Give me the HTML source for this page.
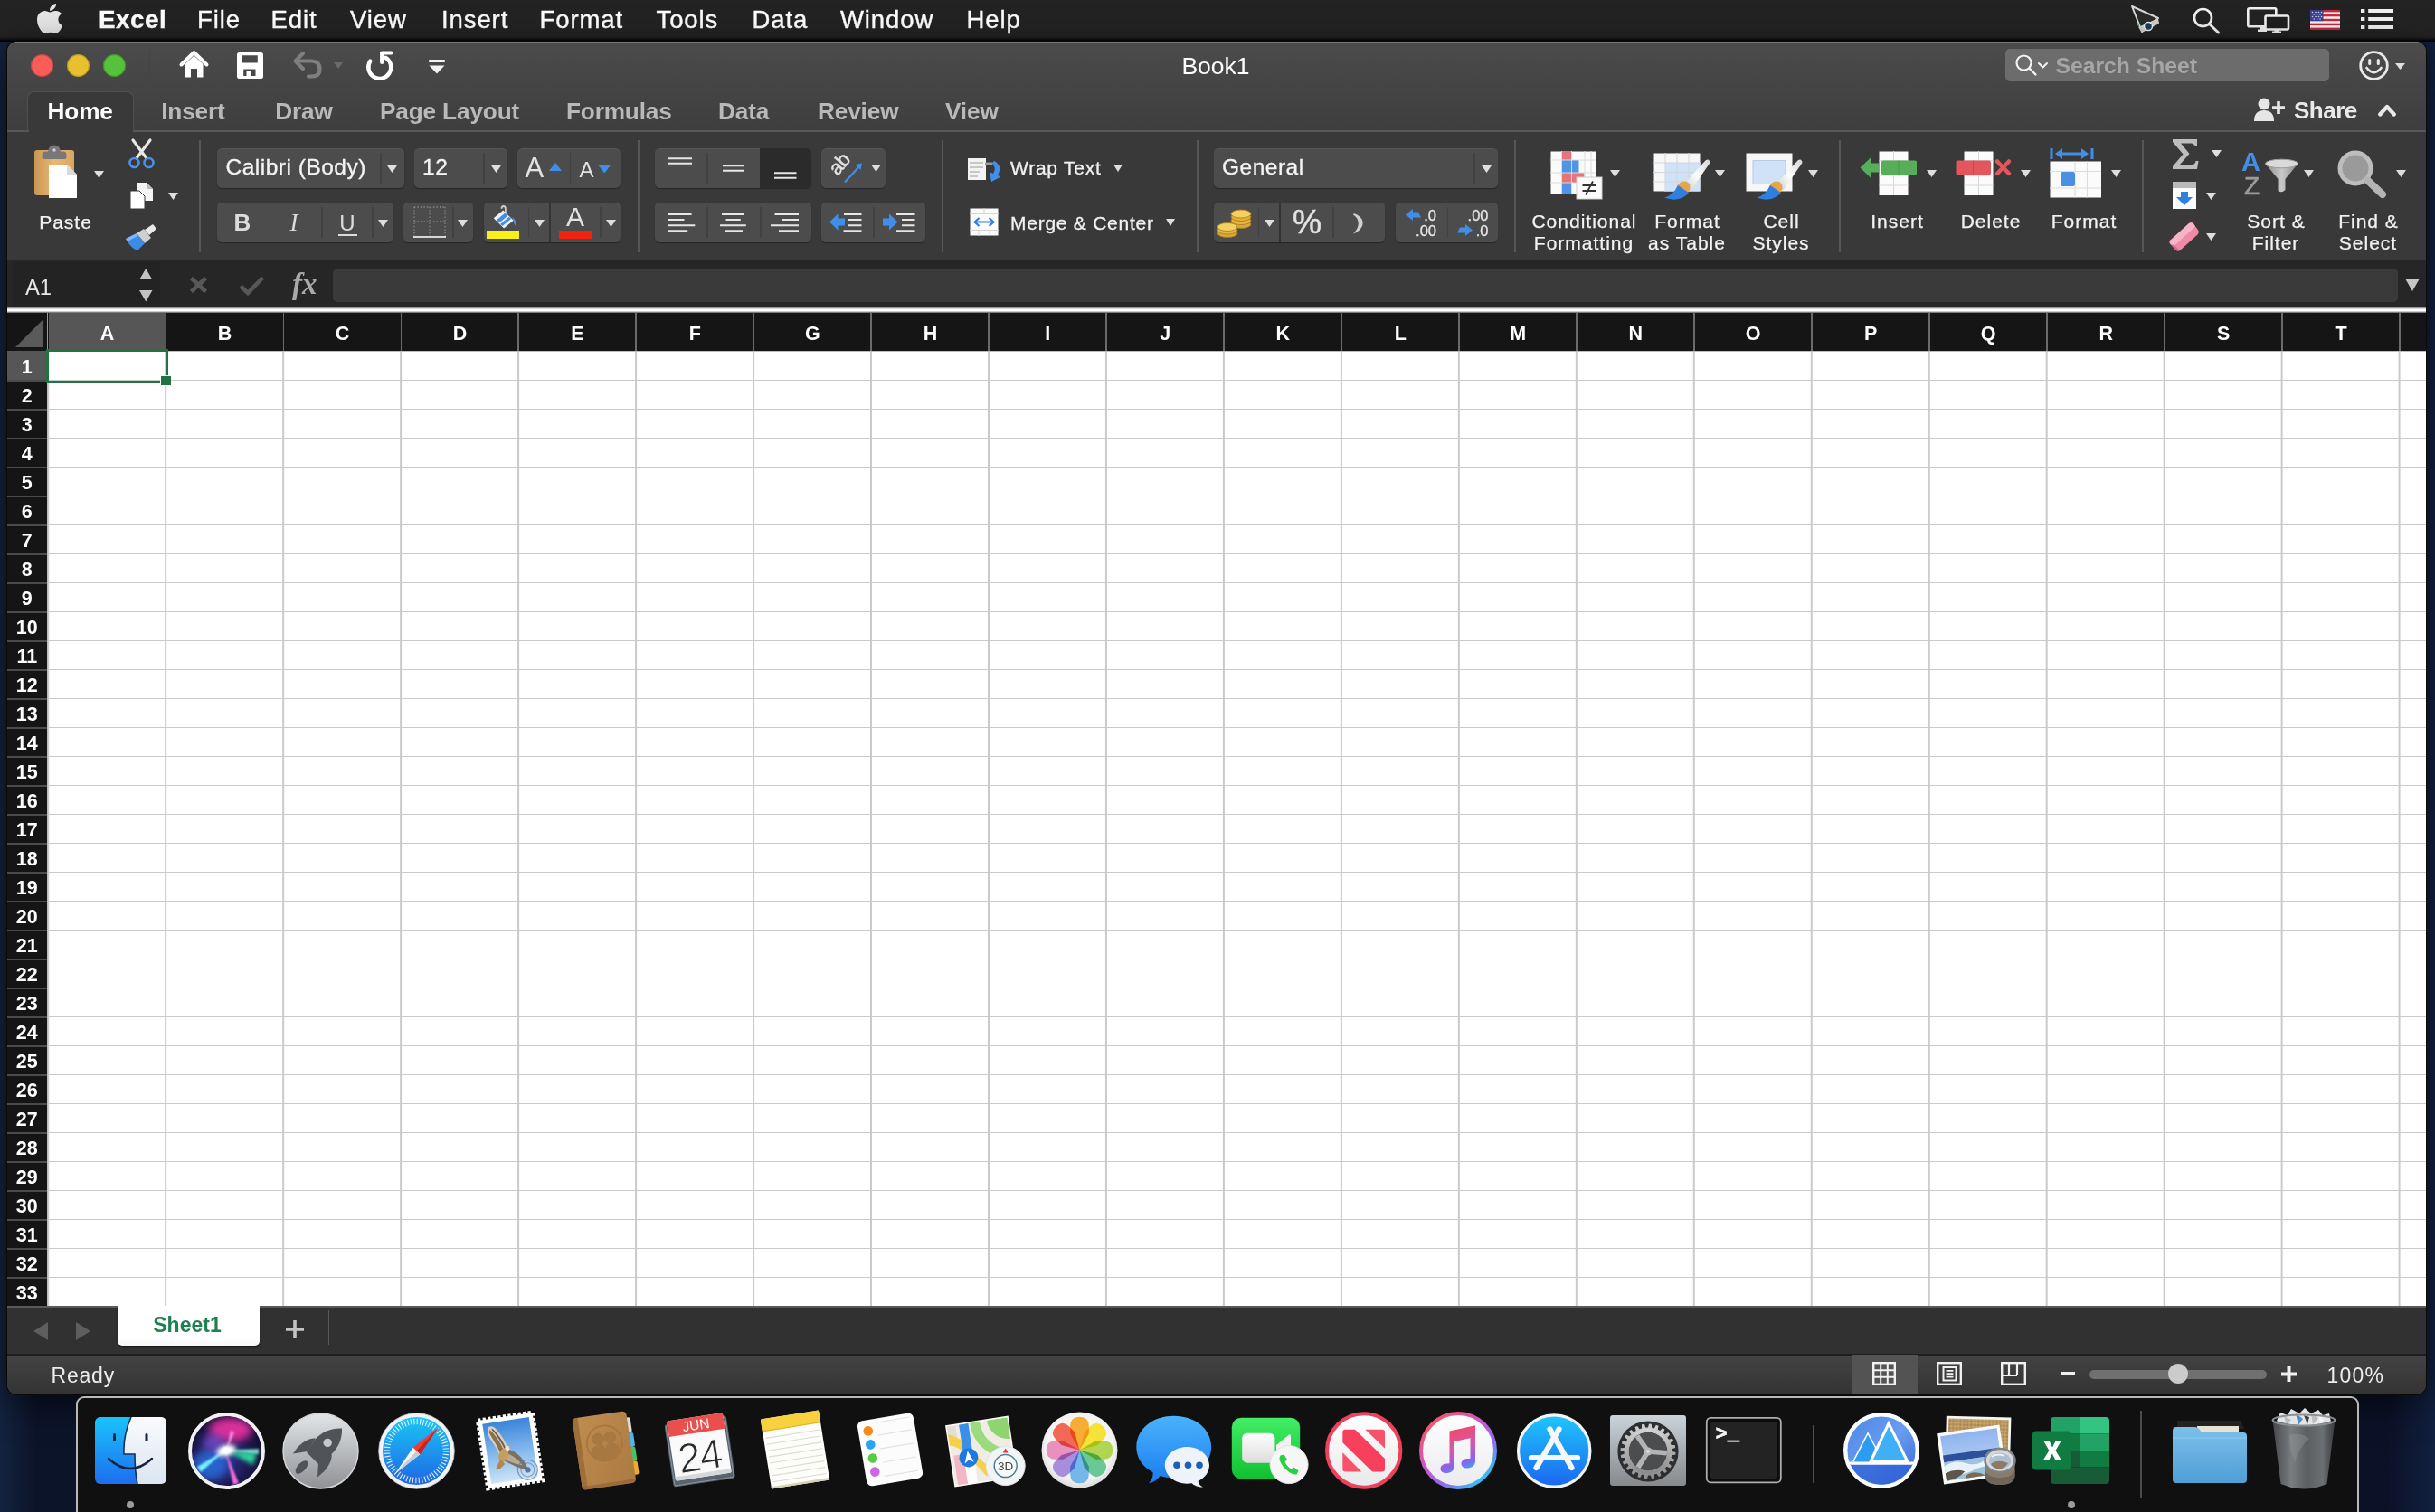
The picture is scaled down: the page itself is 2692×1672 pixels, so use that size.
<!DOCTYPE html>
<html><head><meta charset="utf-8"><title>Excel</title>
<style>
*{box-sizing:border-box;margin:0;padding:0}
html,body{width:2692px;height:1672px;overflow:hidden}
body{background:#0c1329;font-family:"Liberation Sans",sans-serif;color:#fff;position:relative}
.a{position:absolute}
.t{position:absolute;white-space:nowrap;line-height:1}
.c{text-align:center}
svg{position:absolute;overflow:visible}
#desk{left:0;top:0;width:2692px;height:1672px;background:linear-gradient(90deg,#13233f 0,#0c142a 40px,#0b1228 2640px,#11203f 2692px)}
#menubar{left:0;top:0;width:2692px;height:45.5px;background:linear-gradient(#232323 0,#232323 40px,#17171c 42.5px,#000 45.5px)}
#menubar .t{font-size:27.5px;top:8.2px;color:#fff;letter-spacing:.9px;-webkit-text-stroke:.35px #fff}
#win{left:8px;top:46px;width:2673.8px;height:1496px;border-radius:11px;overflow:hidden;background:#393939;box-shadow:0 0 0 1px #0a0a0a,0 10px 40px rgba(0,0,0,.6)}
#titlebar{left:0;top:0;width:2675px;height:99px;background:linear-gradient(#4b4b4b,#3e3e3e);border-top:1.5px solid #767676}
#tabline{left:0;top:98px;width:2675px;height:2px;background:#575757}
.tab{font-size:26.2px;font-weight:bold;color:#b9b9b9;top:63.7px;letter-spacing:-.15px}
#ribbon{left:0;top:100px;width:2675px;height:142px;background:#393939}
.grp{position:absolute;background:#4c4c4c;border-radius:5.5px;box-shadow:0 1px 1px rgba(0,0,0,.35),inset 0 1px 0 rgba(255,255,255,.06)}
.dv{position:absolute;width:1.5px;background:#414141;top:5px;bottom:5px}
.sep{position:absolute;width:2px;background:#565656;top:55px;height:124px}
.lbl{font-size:21px;color:#f2f2f2;letter-spacing:1px;text-indent:1px;-webkit-text-stroke:.25px #f2f2f2}
.dd{fill:#dedede}
#fbar{left:0;top:242px;width:2675px;height:53px;background:#262626}
#fline{left:0;top:294px;width:2675px;height:6px;background:linear-gradient(#777,#fff 35%,#fff 65%,#555)}
#colhdr{left:0;top:300px;width:2675px;height:42px;background:#151515}
#rowhdr{left:0;top:342px;width:44px;height:1056px;background:#151515}
.ch{font-weight:bold;font-size:21.5px;color:#fff;top:13px;width:130px;text-align:center}
.rh{font-weight:bold;font-size:21.5px;color:#fff;left:0;width:43.5px;text-align:center}
#cells{left:45px;top:342px;width:2630px;height:1056px;background-color:#fff;
background-image:linear-gradient(90deg,#cacaca 1.5px,transparent 1.5px),linear-gradient(180deg,#cacaca 1.5px,transparent 1.5px);
background-size:129.98px 100%,100% 32px;background-position:129.2px 0,0 32px}
#tabbar{left:0;top:1398px;width:2675px;height:53px;background:#313131}
#status{left:0;top:1451px;width:2675px;height:45px;background:linear-gradient(#434343,#333);border-top:2px solid #1d1d1d}
#dock{left:84px;top:1544px;width:2524px;height:140px;background:#101010;border:2px solid #b9b9b9;border-radius:9px}
</style></head><body>
<div id="desk" class="a"></div>
<div id="menubar" class="a">
<svg style="left:41px;top:3.5px" width="28" height="33" viewBox="4 32 376 448" preserveAspectRatio="none"><path fill="#e6e6e6" d="M318.7 268.7c-.2-36.7 16.4-64.4 50-84.800-18.800-26.900-47.200-41.700-84.700-44.600-35.500-2.800-74.300 20.700-88.500 20.700-15 0-49.400-19.700-76.400-19.700C63.300 141.200 4 184.800 4 273.500q0 39.300 14.400 81.200c12.800 36.700 59 126.700 107.200 125.200 25.200-.6 43-17.900 75.800-17.900 31.800 0 48.300 17.900 76.400 17.900 48.600-.7 90.400-82.500 102.600-119.300-65.200-30.700-61.700-90-61.700-91.900zm-56.600-164.200c27.300-32.400 24.800-61.900 24-72.500-24.100 1.400-52 16.400-67.900 34.900-17.500 19.800-27.800 44.300-25.600 71.900 26.100 2 49.900-11.400 69.500-34.300z"/></svg>
<div class="t" style="left:109px;font-weight:bold;letter-spacing:.5px;font-size:27.800px;top:8px">Excel</div>
<div class="t" style="left:218px">File</div>
<div class="t" style="left:299.5px">Edit</div>
<div class="t" style="left:387px">View</div>
<div class="t" style="left:488px">Insert</div>
<div class="t" style="left:596.5px">Format</div>
<div class="t" style="left:725.5px">Tools</div>
<div class="t" style="left:831.5px">Data</div>
<div class="t" style="left:929px">Window</div>
<div class="t" style="left:1068.5px">Help</div>
<!-- projector / presentation icon -->
<svg style="left:2355px;top:5px" width="34" height="34" viewBox="0 0 34 34"><path d="M2 2 L31 15 L13 30 Z" fill="#2a2a2a" stroke="#d8d8d8" stroke-width="2" stroke-linejoin="round"/><path d="M9 25 L31 15 L32 21 L13 31 Z" fill="#cfcfcf"/><circle cx="20" cy="24" r="4.500" fill="#1d3c5a" stroke="#eee" stroke-width="1.500"/><circle cx="8.500" cy="22" r="1.600" fill="#3fbf4f"/></svg>
<!-- spotlight -->
<svg style="left:2424px;top:8px" width="31" height="30" viewBox="0 0 31 30"><circle cx="11.500" cy="11.500" r="9.500" fill="none" stroke="#f0f0f0" stroke-width="2.600"/><path d="M18.500 18.500 L28.500 28" stroke="#f0f0f0" stroke-width="3" stroke-linecap="round"/></svg>
<!-- displays -->
<svg style="left:2484px;top:8px" width="48" height="29" viewBox="0 0 48 29"><rect x="1.300" y="1.300" width="31" height="20" rx="1.500" fill="none" stroke="#f0f0f0" stroke-width="2.600"/><path d="M12 27 h10 v-2.500 h-2 v-3 h-6 v3 h-2z" fill="#f0f0f0"/><rect x="20.500" y="9.500" width="25.500" height="15" rx="1.500" fill="#1f1f1f" stroke="#f0f0f0" stroke-width="2.600"/><path d="M28 28.500 h10 v-2 h-2.500 v-2 h-5 v2 h-2.500z" fill="#f0f0f0"/></svg>
<!-- flag -->
<svg style="left:2554px;top:11px" width="33" height="22" viewBox="0 0 33 22"><rect width="33" height="22" fill="#f4f4f4"/><g fill="#c8283c"><rect y="0" width="33" height="2.400"/><rect y="4.900" width="33" height="2.400"/><rect y="9.800" width="33" height="2.400"/><rect y="14.700" width="33" height="2.400"/><rect y="19.600" width="33" height="2.400"/></g><rect width="14.500" height="12.200" fill="#3c3f8f"/><g fill="#cfd2ee"><circle cx="2.500" cy="2.500" r=".8"/><circle cx="6" cy="2.500" r=".8"/><circle cx="9.500" cy="2.500" r=".8"/><circle cx="12.500" cy="2.500" r=".8"/><circle cx="4.200" cy="5" r=".8"/><circle cx="7.700" cy="5" r=".8"/><circle cx="11" cy="5" r=".8"/><circle cx="2.500" cy="7.500" r=".8"/><circle cx="6" cy="7.500" r=".8"/><circle cx="9.500" cy="7.500" r=".8"/><circle cx="12.500" cy="7.500" r=".8"/><circle cx="4.200" cy="10" r=".8"/><circle cx="7.700" cy="10" r=".8"/><circle cx="11" cy="10" r=".8"/></g></svg>
<!-- notification list -->
<svg style="left:2610px;top:10px" width="36.500" height="22" viewBox="0 0 38 22" preserveAspectRatio="none"><g fill="#f0f0f0"><rect x="0" y="0" width="4.500" height="4"/><rect x="8.500" y="0" width="29" height="4"/><rect x="0" y="9" width="4.500" height="4"/><rect x="8.500" y="9" width="29" height="4"/><rect x="0" y="18" width="4.500" height="4"/><rect x="8.500" y="18" width="29" height="4"/></g></svg>
</div>
<div id="win" class="a">
<div id="titlebar" class="a"></div>
<div class="a" style="left:25.500px;top:14px;width:25px;height:25px;border-radius:50%;background:#fc5c57;box-shadow:inset 0 0 0 1.2px rgba(0,0,0,.2)"></div>
<div class="a" style="left:65.500px;top:14px;width:25px;height:25px;border-radius:50%;background:#e8c02f;box-shadow:inset 0 0 0 1.2px rgba(0,0,0,.2)"></div>
<div class="a" style="left:105.500px;top:14px;width:25px;height:25px;border-radius:50%;background:#56c13a;box-shadow:inset 0 0 0 1.2px rgba(0,0,0,.2)"></div>
<div class="a" style="left:157px;top:10px;width:1px;height:34px;background:#444"></div>
<!-- home -->
<svg style="left:190px;top:9px" width="33" height="32" viewBox="0 0 33 32"><path d="M2.500 16.500 L16.500 3 L30.500 16.500" fill="none" stroke="#fff" stroke-width="4" stroke-linecap="round" stroke-linejoin="round"/><path d="M6.500 16 L16.500 6.500 L26.500 16 V30.500 H20 V21 H13 V30.500 H6.500Z" fill="#fff"/></svg>
<!-- save -->
<svg style="left:254px;top:12px" width="29" height="29" viewBox="0 0 29 29"><path d="M2.500 0 H26.500 Q29 0 29 2.500 V26.500 Q29 29 26.500 29 H2.500 Q0 29 0 26.500 V2.500 Q0 0 2.500 0Z M5.500 3.200 V11.500 H22.800 V3.200Z M7.200 18.500 V26 H20.500 V18.500Z" fill="#fff" fill-rule="evenodd"/><rect x="10.500" y="20.500" width="4.800" height="5.500" fill="#fff"/></svg>
<!-- undo (disabled) -->
<svg style="left:316px;top:11px" width="32" height="30" viewBox="0 0 32 30"><path d="M11 2 L2.500 10.500 L11 19" fill="none" stroke="#7f7f7f" stroke-width="4.200" stroke-linecap="round" stroke-linejoin="round"/><path d="M3.500 10.500 H20 Q29.500 10.500 29.500 19.500 Q29.500 27.500 21 27.500 H17" fill="none" stroke="#7f7f7f" stroke-width="4.200" stroke-linecap="round"/></svg>
<svg style="left:361px;top:23px" width="10" height="7" viewBox="0 0 10 7"><path d="M0 0H10L5 7Z" fill="#6a6a6a"/></svg>
<!-- redo -->
<svg style="left:396px;top:10px" width="32" height="32" viewBox="0 0 32 32"><path d="M23.500 8.500 A12.500 12.500 0 1 1 6 10.500" fill="none" stroke="#fff" stroke-width="4.400" stroke-linecap="round" transform="rotate(-6 16 18)"/><path d="M18 2.500 H28.500 M18.200 2.500 V13" fill="none" stroke="#fff" stroke-width="4.200" stroke-linecap="round" stroke-linejoin="round"/></svg>
<!-- customize -->
<svg style="left:466px;top:20px" width="18" height="16" viewBox="0 0 18 16"><rect x="0" y="0" width="18" height="3" rx="1" fill="#f2f2f2"/><path d="M0.500 6.500 H17.500 L9 15.500Z" fill="#f2f2f2"/></svg>
<div class="t c" style="left:1186px;width:300px;top:14.300px;font-size:26.500px;color:#fff">Book1</div>
<!-- search -->
<div class="a" style="left:2209px;top:8px;width:358px;height:36px;border-radius:5px;background:#6c6c6c"></div>
<svg style="left:2220px;top:14px" width="24" height="24" viewBox="0 0 24 24"><circle cx="9.500" cy="9.500" r="8" fill="none" stroke="#f2f2f2" stroke-width="2.200"/><path d="M15.500 15.500 L22.500 22.500" stroke="#f2f2f2" stroke-width="2.400" stroke-linecap="round"/></svg>
<svg style="left:2245px;top:23px" width="11" height="7" viewBox="0 0 11 7"><path d="M1 1 L5.500 5.500 L10 1" fill="none" stroke="#f2f2f2" stroke-width="2" stroke-linecap="round" stroke-linejoin="round"/></svg>
<div class="t" style="left:2264.500px;top:15.300px;font-size:24.700px;font-weight:bold;color:#a6a6a6">Search Sheet</div>
<!-- smiley -->
<svg style="left:2600px;top:10px" width="33" height="33" viewBox="0 0 33 33"><circle cx="16.500" cy="16.500" r="14.800" fill="none" stroke="#e8e8e8" stroke-width="2.800"/><rect x="10.200" y="9" width="3" height="7" rx="1.500" fill="#e8e8e8"/><rect x="19.800" y="9" width="3" height="7" rx="1.500" fill="#e8e8e8"/><path d="M8.500 19 Q16.500 29 24.500 19" fill="none" stroke="#e8e8e8" stroke-width="2.800" stroke-linecap="round"/></svg>
<svg style="left:2640px;top:24px" width="11" height="7" viewBox="0 0 11 7"><path d="M0 0H11L5.500 7Z" class="dd"/></svg>
<!-- tabs -->
<div class="a" style="left:22px;top:55px;width:118px;height:46px;background:#393939;border-radius:8px 8px 0 0;border:1.500px solid #505050;border-bottom:none"></div>
<div id="tabline" class="a"></div>
<div class="a" style="left:23.500px;top:96px;width:115px;height:5px;background:#393939"></div>
<div class="t tab" style="left:44.6px;color:#fff">Home</div>
<div class="t tab" style="left:170.2px">Insert</div>
<div class="t tab" style="left:296.2px">Draw</div>
<div class="t tab" style="left:412px">Page Layout</div>
<div class="t tab" style="left:618px">Formulas</div>
<div class="t tab" style="left:786px">Data</div>
<div class="t tab" style="left:896px">Review</div>
<div class="t tab" style="left:1037px">View</div>
<!-- share -->
<svg style="left:2484px;top:62px" width="36" height="27" viewBox="0 0 36 27"><circle cx="11" cy="7" r="6.500" fill="#e6e6e6"/><path d="M0 26 Q0 14 11 14 Q22 14 22 26Z" fill="#e6e6e6"/><path d="M27 4 V18 M20 11 H34" stroke="#e6e6e6" stroke-width="3.600"/></svg>
<div class="t" style="left:2528px;top:62.500px;font-size:26px;font-weight:bold;letter-spacing:-.5px;color:#e9e9e9">Share</div>
<svg style="left:2621px;top:69px" width="20" height="14" viewBox="0 0 20 14"><path d="M2.200 11.500 L10 3 L17.800 11.500" fill="none" stroke="#e9e9e9" stroke-width="4.400" stroke-linecap="round" stroke-linejoin="round"/></svg>
<div id="ribbon" class="a"></div>
<style>.sep{top:109px;height:124px}</style>
<!-- ===== Clipboard ===== -->
<svg style="left:29px;top:113px" width="49" height="61" viewBox="0 0 49 61"><defs><linearGradient id="pb" x1="0" x2="1"><stop offset="0" stop-color="#c99552"/><stop offset=".5" stop-color="#e9b875"/><stop offset="1" stop-color="#d9a661"/></linearGradient></defs><rect x="1" y="7" width="44" height="50" rx="3" fill="url(#pb)"/><path d="M9.500 12 Q9.500 8.500 13 8.500 H16 Q17 1.500 23 1.500 Q29 1.500 30 8.500 H33 Q36.500 8.500 36.500 12 V15 Q36.500 17 34.500 17 H11.500 Q9.500 17 9.500 15Z" fill="#787878"/><circle cx="23" cy="7" r="1.700" fill="#d0d0d0"/><path d="M17 23 H37 L48 34 V60 H17Z" fill="#fff"/><path d="M37 23 L48 34 H37Z" fill="#d9d9d9"/></svg>
<svg style="left:96px;top:143px" width="11" height="8" viewBox="0 0 11 8"><path d="M0 0H11L5.500 8Z" class="dd"/></svg>
<div class="t lbl c" style="left:14px;width:100px;top:188.500px">Paste</div>
<!-- cut -->
<svg style="left:134px;top:108px" width="29" height="33" viewBox="0 0 29 33"><path d="M5 1 L20 21 M24 1 L9 21" stroke="#e8e8e8" stroke-width="3.200" stroke-linecap="round"/><circle cx="6.500" cy="26" r="5" fill="none" stroke="#4a8fe8" stroke-width="2.600"/><circle cx="22.500" cy="26" r="5" fill="none" stroke="#4a8fe8" stroke-width="2.600"/></svg>
<!-- copy -->
<svg style="left:136px;top:156px" width="25" height="29" viewBox="0 0 25 29"><path d="M8 0 H18 L25 7 V20 H8Z" fill="#f4f4f4"/><path d="M18 0 L25 7 H18Z" fill="#bdbdbd"/><path d="M0 9 H10 L16 15 V29 H0Z" fill="#fff" stroke="#393939" stroke-width="1"/></svg>
<svg style="left:178px;top:166.500px" width="11" height="8" viewBox="0 0 11 8"><path d="M0 0H11L5.500 8Z" class="dd"/></svg>
<!-- format painter -->
<svg style="left:131px;top:202px" width="35" height="30" viewBox="0 0 35 30"><path d="M21 6 L30 0 L34 5 L26 12Z" fill="#e9e9e9"/><path d="M12 10 L20 5 L28 15 L21 21Z" fill="#d0d0d0"/><path d="M0 16 L12 10 L21 21 L13 29 Q6 27 0 16Z" fill="#3e8be6"/><path d="M0 16 L12 10 L14 12.500 L2 19Z" fill="#7fb6f5"/></svg>
<div class="sep" style="left:212px"></div>
<!-- ===== Font ===== -->
<div class="grp" style="left:232px;top:118px;width:207px;height:44px"><div class="dv" style="left:180px"></div></div>
<div class="t" style="left:241.500px;top:127.200px;font-size:24.500px;letter-spacing:.5px;color:#f4f4f4;-webkit-text-stroke:.3px #f4f4f4">Calibri (Body)</div>
<svg style="left:420px;top:136.500px" width="11" height="8" viewBox="0 0 11 8"><path d="M0 0H11L5.500 8Z" class="dd"/></svg>
<div class="grp" style="left:450px;top:118px;width:102.500px;height:44px"><div class="dv" style="left:76px"></div></div>
<div class="t" style="left:459px;top:127.200px;font-size:24.500px;letter-spacing:.5px;color:#f4f4f4;-webkit-text-stroke:.3px #f4f4f4">12</div>
<svg style="left:534.500px;top:136.500px" width="11" height="8" viewBox="0 0 11 8"><path d="M0 0H11L5.500 8Z" class="dd"/></svg>
<div class="grp" style="left:564px;top:118px;width:114px;height:44px"><div class="dv" style="left:57.500px"></div></div>
<div class="t" style="left:572.500px;top:124px;font-size:31px;color:#e2e2e2">A</div>
<svg style="left:599px;top:134px" width="14" height="9" viewBox="0 0 14 9"><path d="M0 9H14L7 0Z" fill="#3f8fe9"/></svg>
<div class="t" style="left:632.500px;top:129.500px;font-size:24px;color:#e2e2e2">A</div>
<svg style="left:653px;top:137px" width="14.500" height="8.500" viewBox="0 0 14 9"><path d="M0 0H14L7 9Z" fill="#3f8fe9"/></svg>
<!-- B I U -->
<div class="grp" style="left:232px;top:178px;width:195px;height:44px"><div class="dv" style="left:57.500px"></div><div class="dv" style="left:115px"></div><div class="dv" style="left:171px"></div></div>
<div class="t c" style="left:240px;width:40px;top:187px;font-size:26px;font-weight:bold;color:#dcdcdc">B</div>
<div class="t c" style="left:297px;width:40px;top:187px;font-size:27px;font-style:italic;font-family:'Liberation Serif',serif;color:#dcdcdc">I</div>
<div class="t c" style="left:356px;width:40px;top:188.500px;font-size:24px;color:#dcdcdc">U</div>
<div class="a" style="left:366px;top:212.500px;width:21px;height:2px;background:#dcdcdc"></div>
<svg style="left:410px;top:196.500px" width="11" height="8" viewBox="0 0 11 8"><path d="M0 0H11L5.500 8Z" class="dd"/></svg>
<!-- borders -->
<div class="grp" style="left:438px;top:178px;width:76.500px;height:44px"><div class="dv" style="left:54px"></div></div>
<svg style="left:449px;top:182px" width="36" height="36" viewBox="0 0 36 36"><g stroke="#8c8c8c" stroke-width="1.300" stroke-dasharray="1.300 2.200" fill="none"><path d="M1 1 H35"/><path d="M1 17 H35"/><path d="M1 1 V33"/><path d="M18 1 V33"/><path d="M35 1 V33"/></g><path d="M0 34 H36" stroke="#d6d6d6" stroke-width="2.200"/></svg>
<svg style="left:498px;top:196.500px" width="11" height="8" viewBox="0 0 11 8"><path d="M0 0H11L5.500 8Z" class="dd"/></svg>
<!-- fill / font colour -->
<div class="grp" style="left:527px;top:178px;width:151px;height:44px"><div class="dv" style="left:48.500px"></div><div class="dv" style="left:72px;top:0;bottom:0;width:2px;background:#343434"></div><div class="dv" style="left:128px"></div></div>
<svg style="left:535px;top:181.500px" width="30" height="25.500" viewBox="0 0 34 29"><path d="M13 3 Q13 0 15.500 0 Q18 0 18 3 V9" fill="none" stroke="#cfcfcf" stroke-width="2"/><path d="M3 15 L15 5 L28 18 L16 28Z" fill="#f1f1f1"/><path d="M6.500 17.500 L17.500 8.500 L21 12 L10 21Z" fill="#3f8fe9"/><path d="M11.500 22.500 L22.500 13.500 L25 16 L14 25Z" fill="#3f8fe9"/><path d="M26 14 Q33 17 30.500 25 Q28 22 27.500 17Z" fill="#3f8fe9"/></svg>
<div class="a" style="left:530px;top:208.500px;width:36.300px;height:9.800px;background:#f8f016"></div>
<svg style="left:582.500px;top:196.500px" width="11" height="8" viewBox="0 0 11 8"><path d="M0 0H11L5.500 8Z" class="dd"/></svg>
<div class="t c" style="left:608px;width:40px;top:179px;font-size:30px;color:#e2e2e2">A</div>
<div class="a" style="left:610px;top:208.500px;width:36.500px;height:9.500px;background:#f2220f"></div>
<svg style="left:662px;top:196.500px" width="11" height="8" viewBox="0 0 11 8"><path d="M0 0H11L5.500 8Z" class="dd"/></svg>
<div class="sep" style="left:697px"></div>
<!-- ===== Alignment ===== -->
<div class="grp" style="left:716px;top:118px;width:173px;height:44px;overflow:hidden"><div class="a" style="left:116px;top:0;width:57px;height:44px;background:#2b2b2b"></div><div class="dv" style="left:57px"></div></div>
<svg style="left:731px;top:128px" width="26" height="8" viewBox="0 0 26 8"><path d="M0 1.200H26M0 6.800H26" stroke="#e6e6e6" stroke-width="2"/></svg>
<svg style="left:790.500px;top:136px" width="24" height="8" viewBox="0 0 24 8"><path d="M0 1.200H24M0 6.800H24" stroke="#e6e6e6" stroke-width="2"/></svg>
<svg style="left:848px;top:144px" width="24.500" height="8" viewBox="0 0 24.500 8"><path d="M0 1.200H24.500M0 6.800H24.500" stroke="#e6e6e6" stroke-width="2"/></svg>
<div class="grp" style="left:900px;top:118px;width:71px;height:44px"></div>
<svg style="left:911px;top:124px" width="35" height="32" viewBox="0 0 35 32"><text x="0" y="0" transform="translate(7 25) rotate(-50)" font-family="Liberation Sans" font-size="22" fill="#e4e4e4" stroke="#e4e4e4" stroke-width=".4" letter-spacing="-.5">ab</text><path d="M15 31.500 L32 13" stroke="#3f8fe9" stroke-width="2.200"/><path d="M26.500 12 L34 10.500 L32.500 18Z" fill="#3f8fe9"/></svg>
<svg style="left:954.500px;top:136px" width="11" height="8" viewBox="0 0 11 8"><path d="M0 0H11L5.500 8Z" class="dd"/></svg>
<div class="grp" style="left:716px;top:178px;width:173px;height:44px"><div class="dv" style="left:57px"></div><div class="dv" style="left:116px"></div></div>
<svg style="left:730px;top:190px" width="27" height="21" viewBox="0 0 27 21"><path d="M0 1H26.600M0 7H18.500M0 13.200H30.300M0 19.200H22.200" stroke="#e6e6e6" stroke-width="2"/></svg>
<svg style="left:788px;top:190px" width="28" height="21" viewBox="0 0 28 21"><path d="M2 1H27M6.500 7H22.800M0 13.200H28.800M5 19.200H25" stroke="#e6e6e6" stroke-width="2"/></svg>
<svg style="left:843.500px;top:190px" width="31" height="21" viewBox="0 0 31 21"><path d="M4.500 1H31M12.500 7H31M0 13.200H31M9 19.200H31" stroke="#e6e6e6" stroke-width="2"/></svg>
<div class="grp" style="left:900px;top:178px;width:114.500px;height:44px"><div class="dv" style="left:57px"></div></div>
<svg style="left:909px;top:189px" width="36" height="22" viewBox="0 0 36 22"><path d="M0 10.500 L9.500 1.500 V6.500 H17 V14.500 H9.500 V19.500Z" fill="#3f8fe9"/><path d="M16 2H35.500M21 8H35.500M21 14.200H35.500M15.500 20.200H35.500" stroke="#e6e6e6" stroke-width="2"/></svg>
<svg style="left:967px;top:189px" width="37" height="22" viewBox="0 0 37 22"><path d="M17.500 10.500 L8 1.500 V6.500 H1 V14.500 H8 V19.500Z" fill="#3f8fe9"/><path d="M16 2H36.500M22 8H36.500M22 14.200H36.500M16 20.200H36.500" stroke="#e6e6e6" stroke-width="2"/></svg>
<div class="sep" style="left:1033px"></div>
<!-- wrap text -->
<svg style="left:1061px;top:128px" width="41" height="28" viewBox="0 0 41 28"><rect x="1" y="1" width="20" height="24" fill="#f3f3f3"/><path d="M3 6H18M3 11H18M3 16H14M3 21H12" stroke="#b9b9b9" stroke-width="1.600"/><rect x="20" y="5.500" width="8" height="3.500" fill="#9a9a9a"/><path d="M30 4 Q40 9 34 20 L37.500 21.500 L27 27 L25 16 L29 18 Q33 11 27.500 6.500Z" fill="#3f8fe9"/></svg>
<div class="t" style="left:1109px;top:129px;font-size:21px;letter-spacing:.75px;color:#f2f2f2;-webkit-text-stroke:.3px #f2f2f2">Wrap Text</div>
<svg style="left:1222.500px;top:136px" width="10" height="8" viewBox="0 0 10 8"><path d="M0 0H10L5 8Z" class="dd"/></svg>
<!-- merge -->
<svg style="left:1064px;top:184px" width="32" height="31" viewBox="0 0 32 31"><rect x=".5" y=".5" width="31" height="30" fill="#fbfbfb"/><path d="M0 6.500H32M0 24.500H32M16 0V6.500M10 24.500V31M22 24.500V31" stroke="#d5d5d5" stroke-width="1"/><path d="M8 15.500H24" stroke="#2f7fdc" stroke-width="2.200"/><path d="M10.500 11 L5.500 15.500 L10.500 20M21.500 11 L26.500 15.500 L21.500 20" fill="none" stroke="#2f7fdc" stroke-width="2.200"/></svg>
<div class="t" style="left:1109px;top:190px;font-size:21px;letter-spacing:.75px;color:#f2f2f2;-webkit-text-stroke:.3px #f2f2f2">Merge &amp; Center</div>
<svg style="left:1281px;top:196px" width="10" height="8" viewBox="0 0 10 8"><path d="M0 0H10L5 8Z" class="dd"/></svg>
<div class="sep" style="left:1315px"></div>
<!-- ===== Number ===== -->
<div class="grp" style="left:1334px;top:118px;width:314px;height:44px"><div class="dv" style="left:287px"></div></div>
<div class="t" style="left:1343px;top:127.200px;font-size:24.500px;letter-spacing:.5px;color:#f4f4f4;-webkit-text-stroke:.3px #f4f4f4">General</div>
<svg style="left:1629.500px;top:136.500px" width="11" height="8" viewBox="0 0 11 8"><path d="M0 0H11L5.500 8Z" class="dd"/></svg>
<div class="grp" style="left:1334px;top:178px;width:188.500px;height:44px"><div class="dv" style="left:48.500px"></div><div class="dv" style="left:72px;top:0;bottom:0;width:2px;background:#343434"></div><div class="dv" style="left:131px"></div></div>
<svg style="left:1337px;top:185px" width="40" height="33" viewBox="0 0 40 33"><g stroke="#a9791c" stroke-width=".8"><ellipse cx="27" cy="17" rx="11" ry="4.500" fill="#d9a733"/><ellipse cx="27" cy="13" rx="11" ry="4.500" fill="#e6b840"/><ellipse cx="27" cy="9" rx="11" ry="4.500" fill="#e0b038"/><ellipse cx="27" cy="5.500" rx="11" ry="4.500" fill="#f4d060"/><ellipse cx="12" cy="27" rx="11" ry="4.500" fill="#d9a733"/><ellipse cx="12" cy="23.500" rx="11" ry="4.500" fill="#e6b840"/><ellipse cx="12" cy="20" rx="11" ry="4.500" fill="#f4d060"/></g></svg>
<svg style="left:1390px;top:196.500px" width="11" height="8" viewBox="0 0 11 8"><path d="M0 0H11L5.500 8Z" class="dd"/></svg>
<div class="t c" style="left:1407px;width:60px;top:182px;font-size:36px;color:#e2e2e2;-webkit-text-stroke:.5px #e2e2e2">%</div>
<svg style="left:1486px;top:190px" width="16" height="23" viewBox="0 0 16 23"><path d="M3 0 Q16 5 11.500 15 Q9 20 2 22.500 Q9 15 7.500 9 Q6.500 4 2 1.500Z" fill="#cfcfcf"/></svg>
<div class="grp" style="left:1534.500px;top:178px;width:113.500px;height:44px"><div class="dv" style="left:57px"></div></div>
<svg style="left:1546px;top:184.500px" width="18" height="13" viewBox="0 0 18 13"><path d="M0 6.500 L8 0 V3.500 H14 L17 9.500 H8 V13Z" fill="#3f8fe9"/></svg>
<div class="t" style="left:1534px;width:46px;text-align:right;top:184.300px;font-size:16.500px;color:#e6e6e6;-webkit-text-stroke:.3px #e6e6e6">.0</div>
<div class="t" style="left:1534px;width:46px;text-align:right;top:200.800px;font-size:16.500px;color:#e6e6e6;-webkit-text-stroke:.3px #e6e6e6">.00</div>
<div class="t" style="left:1591px;width:46.500px;text-align:right;top:184.300px;font-size:16.500px;color:#e6e6e6;-webkit-text-stroke:.3px #e6e6e6">.00</div>
<div class="t" style="left:1591px;width:46.500px;text-align:right;top:200.800px;font-size:16.500px;color:#e6e6e6;-webkit-text-stroke:.3px #e6e6e6">.0</div>
<svg style="left:1602px;top:201.500px" width="18" height="13" viewBox="0 0 18 13"><path d="M18 6.500 L10 0 V3.500 H4 L1 9.500 H10 V13Z" fill="#3f8fe9"/></svg>
<div class="sep" style="left:1665.500px"></div>
<!-- ===== Styles ===== -->
<svg style="left:1705.500px;top:121px" width="58" height="54" viewBox="0 0 58 54"><rect x=".5" y=".5" width="50.500" height="47" fill="#fbfbfb"/><rect x="12.500" y=".5" width="11" height="9.500" fill="#e8737a"/><rect x="12.500" y="10" width="19" height="14" fill="#4f94e6"/><rect x="12.500" y="24" width="25" height="11" fill="#e8737a"/><rect x="12.500" y="35" width="11" height="12.500" fill="#4f94e6"/><path d="M12.500 0V47.500M23.500 0V47.500M38 0V47.500M45 0V47.500M0 10H51M0 24H51M0 35H51" stroke="#dcdcdc" stroke-width="1" fill="none"/><rect x="29" y="29" width="28" height="24" fill="#fafafa" stroke="#cfcfcf" stroke-width="1"/><path d="M35.500 38H50.500M35.500 44H50.500M47 33.500 L39 48.500" stroke="#333" stroke-width="1.800"/></svg>
<svg style="left:1772px;top:142px" width="11" height="8" viewBox="0 0 11 8"><path d="M0 0H11L5.500 8Z" class="dd"/></svg>
<div class="t lbl c" style="left:1663px;width:160px;top:187px;line-height:24px">Conditional<br>Formatting</div>
<!-- format as table -->
<svg style="left:1819.500px;top:123px" width="64" height="53" viewBox="0 0 64 53"><defs><linearGradient id="bh" x1="0" y1="1" x2="1" y2="0"><stop offset="0" stop-color="#c9c9c9"/><stop offset=".5" stop-color="#fdfdfd"/><stop offset="1" stop-color="#d6d6d6"/></linearGradient></defs><rect x=".5" y=".5" width="51" height="42" fill="#f7f7f7"/><rect x="13" y="11" width="38.500" height="31.500" fill="#cfe2f8"/><path d="M13 0V43M26 0V43M39 0V43M0 11H52M0 21.500H52M0 32H52" stroke="#d0d6dd" stroke-width="1"/><path d="M33 35 L58 8 Q62 6 62.500 11 L41 42Z" fill="url(#bh)"/><ellipse cx="33" cy="39" rx="8" ry="7" fill="#e3a64a" transform="rotate(-40 33 39)"/><path d="M27 36 Q22 47 12 49.500 Q24 54 33 49 Q38 46 39 44Z" fill="#2f7fe0"/></svg>
<svg style="left:1888px;top:142px" width="11" height="8" viewBox="0 0 11 8"><path d="M0 0H11L5.500 8Z" class="dd"/></svg>
<div class="t lbl c" style="left:1777px;width:160px;top:187px;line-height:24px">Format<br>as Table</div>
<!-- cell styles -->
<svg style="left:1921.500px;top:123px" width="64" height="53" viewBox="0 0 64 53"><rect x=".5" y=".5" width="51" height="42" fill="#f7f7f7"/><rect x="8" y="8.500" width="36" height="26" fill="#cfe2f8" stroke="#b5cbe6" stroke-width="1"/><path d="M33 35 L58 8 Q62 6 62.500 11 L41 42Z" fill="url(#bh)"/><ellipse cx="33" cy="39" rx="8" ry="7" fill="#e3a64a" transform="rotate(-40 33 39)"/><path d="M27 36 Q22 47 12 49.500 Q24 54 33 49 Q38 46 39 44Z" fill="#2f7fe0"/></svg>
<svg style="left:1990.500px;top:142px" width="11" height="8" viewBox="0 0 11 8"><path d="M0 0H11L5.500 8Z" class="dd"/></svg>
<div class="t lbl c" style="left:1881px;width:160px;top:187px;line-height:24px">Cell<br>Styles</div>
<div class="sep" style="left:2024.500px"></div>
<!-- ===== Cells ===== -->
<svg style="left:2047.500px;top:121px" width="64" height="50" viewBox="0 0 64 50"><rect x="21.500" y=".5" width="32" height="48.500" fill="#fbfbfb"/><path d="M37.500 0V49M21.500 10.500H53.500M21.500 27H53.500M21.500 38H53.500" stroke="#d8d8d8" stroke-width="1"/><rect x="24" y="10.500" width="39" height="16" rx="2" fill="#58ad5b"/><path d="M43 10.500V26.500" stroke="#4b9a4e" stroke-width="1"/><path d="M.5 18.500 L12.500 7 V13.500 H21 V23.500 H12.500 V30Z" fill="#58ad5b"/></svg>
<svg style="left:2122px;top:142px" width="11" height="8" viewBox="0 0 11 8"><path d="M0 0H11L5.500 8Z" class="dd"/></svg>
<div class="t lbl c" style="left:2009px;width:160px;top:187px;line-height:24px">Insert</div>
<svg style="left:2153.500px;top:121px" width="62" height="50" viewBox="0 0 62 50"><rect x="9.500" y=".5" width="32" height="48.500" fill="#fbfbfb"/><path d="M25.500 0V49M9.500 10.500H41.500M9.500 27H41.500M9.500 38H41.500" stroke="#d8d8d8" stroke-width="1"/><rect x=".5" y="10.500" width="38.500" height="16" rx="2" fill="#e3565c"/><path d="M19.500 10.500V26.500" stroke="#c9474d" stroke-width="1"/><path d="M46 11.500 L59 25 M59 11.500 L46 25" stroke="#e3565c" stroke-width="4.500" stroke-linecap="round"/></svg>
<svg style="left:2226px;top:142px" width="11" height="8" viewBox="0 0 11 8"><path d="M0 0H11L5.500 8Z" class="dd"/></svg>
<div class="t lbl c" style="left:2112.500px;width:160px;top:187px;line-height:24px">Delete</div>
<svg style="left:2258px;top:117px" width="58" height="57" viewBox="0 0 58 57"><path d="M2 1V13M47 1V13" stroke="#3f8fe9" stroke-width="3"/><path d="M9 7H40" stroke="#3f8fe9" stroke-width="3"/><path d="M14 1 L6 7 L14 13ZM35 1 L43 7 L35 13Z" fill="#3f8fe9"/><rect x=".5" y="15.500" width="56.500" height="40" fill="#fbfbfb"/><path d="M28 15.500V55.500M41.500 15.500V55.500M0 26.500H57M0 45H57" stroke="#dcdcdc" stroke-width="1"/><rect x="12" y="27" width="16" height="16" rx="2.500" fill="#4a90e2"/></svg>
<svg style="left:2326px;top:142px" width="11" height="8" viewBox="0 0 11 8"><path d="M0 0H11L5.500 8Z" class="dd"/></svg>
<div class="t lbl c" style="left:2215.500px;width:160px;top:187px;line-height:24px">Format</div>
<div class="sep" style="left:2360px"></div>
<!-- ===== Editing ===== -->
<svg style="left:2393px;top:107.500px" width="30" height="33" viewBox="0 0 30 33"><path d="M1 0 H28 V8 H25.500 Q25 4.500 21 4.500 H10 L19.500 16 L9 28 H22 Q26 28 26.500 24 H29.500 L28 33 H1 V30 L12.500 16.500 L1 3Z" fill="#bdbdbd"/></svg>
<svg style="left:2436.500px;top:120px" width="11" height="8" viewBox="0 0 11 8"><path d="M0 0H11L5.500 8Z" class="dd"/></svg>
<svg style="left:2393.500px;top:155px" width="26" height="30" viewBox="0 0 26 30"><rect x="0" y="0" width="26" height="30" fill="#fbfbfb"/><rect x="0" y="0" width="26" height="7" fill="#b9b9b9"/><path d="M9 11H17V17H22L13 26L4 17H9Z" fill="#2f7fdc"/></svg>
<svg style="left:2430.500px;top:166.500px" width="11" height="8" viewBox="0 0 11 8"><path d="M0 0H11L5.500 8Z" class="dd"/></svg>
<svg style="left:2390px;top:200px" width="34" height="32" viewBox="0 0 34 32"><path d="M1 20 L22 1 Q25 -.5 27 1.500 L32.500 9 Q33.500 11.500 31.500 13.500 L12 31 Q9 32.500 7 30 L1.500 24 Q0 22 1 20Z" fill="#f08aa8"/><path d="M1 20 L22 1 Q25 -.5 27 1.500 L29 4.500 L6 25.500 L1.500 24 Q0 22 1 20Z" fill="#f7b4c8"/><path d="M6 25.500 L12 31 Q9 32.500 7 30 L1.500 24Z" fill="#d56a88"/></svg>
<svg style="left:2430.500px;top:212px" width="11" height="8" viewBox="0 0 11 8"><path d="M0 0H11L5.500 8Z" class="dd"/></svg>
<!-- sort & filter -->
<div class="t" style="left:2470px;top:118.500px;font-size:29px;font-weight:bold;color:#3f8fe9">A</div>
<div class="t" style="left:2473px;top:146px;font-size:28px;color:#9a9a9a;-webkit-text-stroke:.7px #9a9a9a">Z</div>
<svg style="left:2496px;top:130px" width="37" height="38" viewBox="0 0 37 38"><defs><linearGradient id="fn" x1="0" x2="1"><stop offset="0" stop-color="#8d8d8d"/><stop offset=".5" stop-color="#c9c9c9"/><stop offset="1" stop-color="#8a8a8a"/></linearGradient></defs><path d="M.5 5 Q18.500 14 36.500 5 L22.500 22 V34 Q18.500 38 14.500 35 V22Z" fill="url(#fn)"/><ellipse cx="18.500" cy="5" rx="18" ry="4.800" fill="#dadada" stroke="#9e9e9e" stroke-width="1"/></svg>
<svg style="left:2538.500px;top:142px" width="11" height="8" viewBox="0 0 11 8"><path d="M0 0H11L5.500 8Z" class="dd"/></svg>
<div class="t lbl c" style="left:2428px;width:160px;top:187px;line-height:24px">Sort &amp;<br>Filter</div>
<!-- find & select -->
<svg style="left:2575.500px;top:119.500px" width="55" height="53" viewBox="0 0 55 53"><circle cx="20" cy="20" r="17" fill="#9a9a9a" stroke="#bdbdbd" stroke-width="5"/><path d="M33.500 33.500 L50 49" stroke="#b4b4b4" stroke-width="8" stroke-linecap="round"/></svg>
<svg style="left:2640.500px;top:142px" width="11" height="8" viewBox="0 0 11 8"><path d="M0 0H11L5.500 8Z" class="dd"/></svg>
<div class="t lbl c" style="left:2530px;width:160px;top:187px;line-height:24px">Find &amp;<br>Select</div>
<!-- ===== formula bar ===== -->
<div id="fbar" class="a"></div>
<div class="a" style="left:6px;top:244px;width:163px;height:49px;background:#232323"></div>
<div class="t" style="left:20px;top:260.200px;font-size:23.800px;color:#e8e8e8">A1</div>
<svg style="left:145.500px;top:251px" width="14.500" height="12" viewBox="0 0 14 12"><path d="M0 12H14L7 0Z" fill="#c2c2c2"/></svg>
<svg style="left:145.500px;top:275px" width="14.500" height="12.500" viewBox="0 0 14 12"><path d="M0 0H14L7 12Z" fill="#c2c2c2"/></svg>
<svg style="left:201px;top:259px" width="21" height="20" viewBox="0 0 21 20"><path d="M2.500 2.500 L18.500 17.500 M18.500 2.500 L2.500 17.500" stroke="#585858" stroke-width="4.600" stroke-linecap="butt"/></svg>
<svg style="left:256px;top:259px" width="28" height="22" viewBox="0 0 28 22"><path d="M2 11.500 L10 19 L26.500 2" fill="none" stroke="#585858" stroke-width="4.600"/></svg>
<div class="t" style="left:315px;top:252px;font-size:33px;font-weight:bold;font-style:italic;font-family:'Liberation Serif',serif;color:#a9a9a9;letter-spacing:0">fx</div>
<div class="a" style="left:360px;top:251px;width:2283px;height:36.500px;border-radius:5px;background:#3a3a3a"></div>
<svg style="left:2651px;top:262px" width="16" height="14" viewBox="0 0 16 14"><path d="M0 0H16L8 14Z" fill="#c6c6c6"/></svg>
<div id="fline" class="a"></div>
<!-- ===== headers ===== -->
<div id="colhdr" class="a">
<div class="a" style="left:45.500px;top:0;width:130px;height:42px;background:#565656"></div>
<svg style="left:9px;top:7px" width="31" height="31" viewBox="0 0 29 29"><path d="M29 0V29H0Z" fill="#5a5a5a"/></svg>
<div class="a" style="left:43.800px;top:0;width:1.700px;height:42px;background:#9c9c9c"></div>
<div class="t ch" style="left:45.5px">A</div>
<div class="a" style="left:174.5px;top:0;width:1.600px;height:42px;background:#6a6a6a"></div>
<div class="t ch" style="left:175.5px">B</div>
<div class="a" style="left:304.5px;top:0;width:1.600px;height:42px;background:#6a6a6a"></div>
<div class="t ch" style="left:305.5px">C</div>
<div class="a" style="left:434.5px;top:0;width:1.600px;height:42px;background:#6a6a6a"></div>
<div class="t ch" style="left:435.4px">D</div>
<div class="a" style="left:564.4px;top:0;width:1.600px;height:42px;background:#6a6a6a"></div>
<div class="t ch" style="left:565.4px">E</div>
<div class="a" style="left:694.4px;top:0;width:1.600px;height:42px;background:#6a6a6a"></div>
<div class="t ch" style="left:695.4px">F</div>
<div class="a" style="left:824.4px;top:0;width:1.600px;height:42px;background:#6a6a6a"></div>
<div class="t ch" style="left:825.4px">G</div>
<div class="a" style="left:954.4px;top:0;width:1.600px;height:42px;background:#6a6a6a"></div>
<div class="t ch" style="left:955.4px">H</div>
<div class="a" style="left:1084.4px;top:0;width:1.600px;height:42px;background:#6a6a6a"></div>
<div class="t ch" style="left:1085.3px">I</div>
<div class="a" style="left:1214.3px;top:0;width:1.600px;height:42px;background:#6a6a6a"></div>
<div class="t ch" style="left:1215.3px">J</div>
<div class="a" style="left:1344.3px;top:0;width:1.600px;height:42px;background:#6a6a6a"></div>
<div class="t ch" style="left:1345.3px">K</div>
<div class="a" style="left:1474.3px;top:0;width:1.600px;height:42px;background:#6a6a6a"></div>
<div class="t ch" style="left:1475.3px">L</div>
<div class="a" style="left:1604.3px;top:0;width:1.600px;height:42px;background:#6a6a6a"></div>
<div class="t ch" style="left:1605.3px">M</div>
<div class="a" style="left:1734.3px;top:0;width:1.600px;height:42px;background:#6a6a6a"></div>
<div class="t ch" style="left:1735.2px">N</div>
<div class="a" style="left:1864.2px;top:0;width:1.600px;height:42px;background:#6a6a6a"></div>
<div class="t ch" style="left:1865.2px">O</div>
<div class="a" style="left:1994.2px;top:0;width:1.600px;height:42px;background:#6a6a6a"></div>
<div class="t ch" style="left:1995.2px">P</div>
<div class="a" style="left:2124.2px;top:0;width:1.600px;height:42px;background:#6a6a6a"></div>
<div class="t ch" style="left:2125.2px">Q</div>
<div class="a" style="left:2254.2px;top:0;width:1.600px;height:42px;background:#6a6a6a"></div>
<div class="t ch" style="left:2255.2px">R</div>
<div class="a" style="left:2384.2px;top:0;width:1.600px;height:42px;background:#6a6a6a"></div>
<div class="t ch" style="left:2385.1px">S</div>
<div class="a" style="left:2514.1px;top:0;width:1.600px;height:42px;background:#6a6a6a"></div>
<div class="t ch" style="left:2515.1px">T</div>
<div class="a" style="left:2644.1px;top:0;width:1.600px;height:42px;background:#6a6a6a"></div>
</div>
<div id="rowhdr" class="a">
<div class="a" style="left:0;top:0;width:44px;height:33px;background:#565656"></div>
<div class="t rh" style="top:8.4px">1</div>
<div class="a" style="left:0;top:32.0px;width:44px;height:2px;background:#4b4b4b"></div>
<div class="t rh" style="top:40.4px">2</div>
<div class="a" style="left:0;top:64.0px;width:44px;height:2px;background:#4b4b4b"></div>
<div class="t rh" style="top:72.4px">3</div>
<div class="a" style="left:0;top:96.0px;width:44px;height:2px;background:#4b4b4b"></div>
<div class="t rh" style="top:104.4px">4</div>
<div class="a" style="left:0;top:128.0px;width:44px;height:2px;background:#4b4b4b"></div>
<div class="t rh" style="top:136.4px">5</div>
<div class="a" style="left:0;top:160.0px;width:44px;height:2px;background:#4b4b4b"></div>
<div class="t rh" style="top:168.4px">6</div>
<div class="a" style="left:0;top:192.0px;width:44px;height:2px;background:#4b4b4b"></div>
<div class="t rh" style="top:200.4px">7</div>
<div class="a" style="left:0;top:224.0px;width:44px;height:2px;background:#4b4b4b"></div>
<div class="t rh" style="top:232.4px">8</div>
<div class="a" style="left:0;top:256.0px;width:44px;height:2px;background:#4b4b4b"></div>
<div class="t rh" style="top:264.4px">9</div>
<div class="a" style="left:0;top:288.0px;width:44px;height:2px;background:#4b4b4b"></div>
<div class="t rh" style="top:296.4px">10</div>
<div class="a" style="left:0;top:320.0px;width:44px;height:2px;background:#4b4b4b"></div>
<div class="t rh" style="top:328.4px">11</div>
<div class="a" style="left:0;top:352.0px;width:44px;height:2px;background:#4b4b4b"></div>
<div class="t rh" style="top:360.4px">12</div>
<div class="a" style="left:0;top:384.0px;width:44px;height:2px;background:#4b4b4b"></div>
<div class="t rh" style="top:392.4px">13</div>
<div class="a" style="left:0;top:416.0px;width:44px;height:2px;background:#4b4b4b"></div>
<div class="t rh" style="top:424.4px">14</div>
<div class="a" style="left:0;top:448.0px;width:44px;height:2px;background:#4b4b4b"></div>
<div class="t rh" style="top:456.4px">15</div>
<div class="a" style="left:0;top:480.0px;width:44px;height:2px;background:#4b4b4b"></div>
<div class="t rh" style="top:488.4px">16</div>
<div class="a" style="left:0;top:512.0px;width:44px;height:2px;background:#4b4b4b"></div>
<div class="t rh" style="top:520.4px">17</div>
<div class="a" style="left:0;top:544.0px;width:44px;height:2px;background:#4b4b4b"></div>
<div class="t rh" style="top:552.4px">18</div>
<div class="a" style="left:0;top:576.0px;width:44px;height:2px;background:#4b4b4b"></div>
<div class="t rh" style="top:584.4px">19</div>
<div class="a" style="left:0;top:608.0px;width:44px;height:2px;background:#4b4b4b"></div>
<div class="t rh" style="top:616.4px">20</div>
<div class="a" style="left:0;top:640.0px;width:44px;height:2px;background:#4b4b4b"></div>
<div class="t rh" style="top:648.4px">21</div>
<div class="a" style="left:0;top:672.0px;width:44px;height:2px;background:#4b4b4b"></div>
<div class="t rh" style="top:680.4px">22</div>
<div class="a" style="left:0;top:704.0px;width:44px;height:2px;background:#4b4b4b"></div>
<div class="t rh" style="top:712.4px">23</div>
<div class="a" style="left:0;top:736.0px;width:44px;height:2px;background:#4b4b4b"></div>
<div class="t rh" style="top:744.4px">24</div>
<div class="a" style="left:0;top:768.0px;width:44px;height:2px;background:#4b4b4b"></div>
<div class="t rh" style="top:776.4px">25</div>
<div class="a" style="left:0;top:800.0px;width:44px;height:2px;background:#4b4b4b"></div>
<div class="t rh" style="top:808.4px">26</div>
<div class="a" style="left:0;top:832.0px;width:44px;height:2px;background:#4b4b4b"></div>
<div class="t rh" style="top:840.4px">27</div>
<div class="a" style="left:0;top:864.0px;width:44px;height:2px;background:#4b4b4b"></div>
<div class="t rh" style="top:872.4px">28</div>
<div class="a" style="left:0;top:896.0px;width:44px;height:2px;background:#4b4b4b"></div>
<div class="t rh" style="top:904.4px">29</div>
<div class="a" style="left:0;top:928.0px;width:44px;height:2px;background:#4b4b4b"></div>
<div class="t rh" style="top:936.4px">30</div>
<div class="a" style="left:0;top:960.0px;width:44px;height:2px;background:#4b4b4b"></div>
<div class="t rh" style="top:968.4px">31</div>
<div class="a" style="left:0;top:992.0px;width:44px;height:2px;background:#4b4b4b"></div>
<div class="t rh" style="top:1000.4px">32</div>
<div class="a" style="left:0;top:1024.0px;width:44px;height:2px;background:#4b4b4b"></div>
<div class="t rh" style="top:1032.4px">33</div>
</div>
<div id="cells" class="a"></div>
<div class="a" style="left:45px;top:342px;width:2630px;height:1.300px;background:#bdbdbd"></div>
<div class="a" style="left:43.800px;top:342px;width:1.700px;height:1056px;background:#bdbdbd"></div>
<div class="a" style="left:43px;top:340px;width:134.500px;height:37.500px;border:3.300px solid #217346"></div>
<div class="a" style="left:168.500px;top:368.500px;width:12px;height:12px;background:#fff"></div>
<div class="a" style="left:170px;top:370px;width:10.500px;height:10px;background:#217346"></div>
<!-- ===== sheet tabs ===== -->
<div id="tabbar" class="a"></div>
<div class="a" style="left:0;top:1398px;width:2675px;height:1.500px;background:#5a5a5a"></div>
<div class="a" style="left:122px;top:1397.500px;width:157px;height:44px;background:linear-gradient(#fff,#fff 80%,#f6f6f6);border-radius:0 0 5px 5px;box-shadow:0 2px 2px rgba(0,0,0,.5)"></div>
<div class="t c" style="left:120.500px;width:157px;top:1408.200px;font-size:23px;font-weight:bold;color:#1f7f4e">Sheet1</div>
<svg style="left:29px;top:1416px" width="16" height="20" viewBox="0 0 16 20"><path d="M16 0V20L0 10Z" fill="#5e5e5e"/></svg>
<svg style="left:75.500px;top:1416px" width="16" height="20" viewBox="0 0 16 20"><path d="M0 0V20L16 10Z" fill="#5e5e5e"/></svg>
<svg style="left:308px;top:1414px" width="20" height="20" viewBox="0 0 20 20"><path d="M10 0V20M0 10H20" stroke="#c4c4c4" stroke-width="3.600"/></svg>
<div class="a" style="left:354.500px;top:1403px;width:1.500px;height:38px;background:#5a5a5a"></div>
<!-- ===== status bar ===== -->
<div id="status" class="a"></div>
<div class="t" style="left:48.500px;top:1463.500px;font-size:23px;color:#ececec;letter-spacing:.8px">Ready</div>
<div class="a" style="left:2038.500px;top:1452px;width:73.500px;height:44px;background:#535353"></div>
<svg style="left:2062px;top:1460px" width="26" height="26" viewBox="0 0 26 26"><rect x="1.200" y="1.200" width="23.600" height="23.600" fill="none" stroke="#f0f0f0" stroke-width="2.400"/><path d="M9.200 1V25M16.800 1V25M1 9.200H25M1 16.800H25" stroke="#f0f0f0" stroke-width="2"/></svg>
<svg style="left:2133px;top:1460px" width="28" height="26" viewBox="0 0 28 26"><rect x="1.200" y="1.200" width="25.600" height="23.600" fill="none" stroke="#f0f0f0" stroke-width="2.400"/><rect x="7.500" y="6" width="14" height="14.500" fill="none" stroke="#f0f0f0" stroke-width="2"/><path d="M10.500 9.800H18.500M10.500 13.200H18.500M10.500 16.600H18.500" stroke="#f0f0f0" stroke-width="1.800"/></svg>
<svg style="left:2204px;top:1460px" width="28" height="26" viewBox="0 0 28 26"><rect x="1.200" y="1.200" width="25.600" height="23.600" fill="none" stroke="#f0f0f0" stroke-width="2.400"/><path d="M1 15H18M9 1V15M18 1V15" stroke="#f0f0f0" stroke-width="2.200" fill="none"/></svg>
<div class="a" style="left:2270px;top:1471px;width:16px;height:4px;background:#f0f0f0"></div>
<div class="a" style="left:2302px;top:1469px;width:196px;height:9.500px;border-radius:5px;background:#707070"></div>
<div class="a" style="left:2389px;top:1462px;width:22px;height:22px;border-radius:50%;background:#cbcbcb"></div>
<svg style="left:2514px;top:1464.500px" width="17" height="17" viewBox="0 0 17 17"><path d="M8.500 0V17M0 8.500H17" stroke="#f0f0f0" stroke-width="4"/></svg>
<div class="t" style="left:2564.500px;top:1463.500px;font-size:23px;color:#ececec;letter-spacing:1.200px">100%</div>
</div><!-- /win -->
<!-- ===== Dock ===== -->
<div id="dock" class="a"></div>
<div class="a" style="left:140px;top:1660px;width:8px;height:8px;border-radius:50%;background:#9c9c9c"></div>
<div class="a" style="left:2286px;top:1660px;width:8px;height:8px;border-radius:50%;background:#9c9c9c"></div>
<!-- finder -->
<svg style="left:105px;top:1567px" width="79" height="74" viewBox="0 0 79 74"><defs><linearGradient id="f1" x1="0" y1="0" x2="0" y2="1"><stop offset="0" stop-color="#19c3fb"/><stop offset="1" stop-color="#1d6ef0"/></linearGradient><linearGradient id="f2" x1="0" y1="0" x2="0" y2="1"><stop offset="0" stop-color="#fafbfd"/><stop offset="1" stop-color="#dbe5f1"/></linearGradient><clipPath id="fc"><rect width="79" height="74" rx="6"/></clipPath></defs><g clip-path="url(#fc)"><rect width="79" height="74" fill="url(#f1)"/><path d="M40 0 Q31 20 32 41 H44 Q44 60 47 74 H79 V0Z" fill="url(#f2)"/><path d="M40 0 Q31 20 32 41 H44 Q44 60 47 74" fill="none" stroke="#1a2f55" stroke-width="1.600"/></g><rect x="20" y="18" width="3" height="9" rx="1.500" fill="#14233f"/><rect x="55.500" y="18" width="3" height="9" rx="1.500" fill="#14233f"/><path d="M15 46 Q39 68 63 46" fill="none" stroke="#14233f" stroke-width="2.400" stroke-linecap="round"/></svg>
<!-- siri -->
<svg style="left:208px;top:1562px" width="85" height="85" viewBox="0 0 85 85"><defs><radialGradient id="s1" cx=".45" cy=".6" r=".65"><stop offset="0" stop-color="#2b3c9a"/><stop offset=".55" stop-color="#1d1a52"/><stop offset="1" stop-color="#0d0a24"/></radialGradient><filter id="b5" x="-50%" y="-50%" width="200%" height="200%"><feGaussianBlur stdDeviation="5"/></filter><filter id="b3" x="-50%" y="-50%" width="200%" height="200%"><feGaussianBlur stdDeviation="2.600"/></filter><filter id="b1" x="-50%" y="-50%" width="200%" height="200%"><feGaussianBlur stdDeviation="1.200"/></filter><clipPath id="sc"><circle cx="42.500" cy="42.500" r="38.500"/></clipPath></defs><circle cx="42.500" cy="42.500" r="40.500" fill="url(#s1)" stroke="#f1f1f4" stroke-width="4"/><g clip-path="url(#sc)"><ellipse cx="47" cy="19" rx="24" ry="13" fill="#dc2f9b" filter="url(#b5)"/><ellipse cx="24" cy="58" rx="20" ry="17" fill="#2a66d6" filter="url(#b5)" opacity=".9"/><ellipse cx="28" cy="33" rx="12" ry="9" fill="#7a4fd0" filter="url(#b5)" opacity=".8"/><path d="M42 42 L76 44 L72 58 Z" fill="#29d39b" filter="url(#b3)"/><path d="M42 41 L10 60 L14 66 Z" fill="#76f0ff" filter="url(#b1)"/><path d="M41 42 L50 80 L56 78 Z" fill="#f46bdb" filter="url(#b1)"/><path d="M42 43 L47 20 L51 22 Z" fill="#f79be6" filter="url(#b1)" opacity=".9"/><path d="M42 42 L78 40 L78 46 Z" fill="#8ff5e0" filter="url(#b1)" opacity=".8"/><ellipse cx="42" cy="42" rx="11" ry="6" fill="#fff" filter="url(#b3)" transform="rotate(-15 42 42)"/><ellipse cx="42" cy="42" rx="5" ry="4" fill="#fff" filter="url(#b1)"/></g></svg>
<!-- launchpad -->
<svg style="left:312px;top:1562px" width="85" height="85" viewBox="0 0 85 85"><defs><linearGradient id="l1" x1="0" y1="0" x2="0" y2="1"><stop offset="0" stop-color="#e3e6e9"/><stop offset="1" stop-color="#8f9194"/></linearGradient></defs><circle cx="42.500" cy="42.500" r="41.500" fill="url(#l1)" stroke="#d4d6d9" stroke-width="1.500"/><g fill="#505357"><path d="M66 17.500 C55 17 44 21 36 30 L27 44 L40 57 L53 47 C62 40 66.500 29 66 17.500Z"/><path d="M37 28.500 C28 28 18 35 12 45.500 L28 43Z"/><path d="M54.500 45 C56 54 49 64 39 71.500 L40 56Z"/><ellipse cx="21.500" cy="60.500" rx="4.500" ry="9" transform="rotate(42 21.500 60.500)"/></g><circle cx="50.200" cy="33.400" r="4.700" fill="#c6c9cc"/></svg>
<!-- safari -->
<svg style="left:418px;top:1562px" width="85" height="85" viewBox="0 0 85 85"><defs><linearGradient id="sa" x1="0" y1="0" x2="0" y2="1"><stop offset="0" stop-color="#19c6f6"/><stop offset="1" stop-color="#1f66e2"/></linearGradient></defs><circle cx="42.500" cy="42.500" r="41.800" fill="#f1f2f5" stroke="#cfd2d6" stroke-width=".8"/><circle cx="42.500" cy="42.500" r="37.500" fill="url(#sa)"/><circle cx="42.500" cy="42.500" r="32.500" fill="none" stroke="#fff" stroke-width="6.500" stroke-dasharray="1.100 2.303" opacity=".85"/><path d="M67 16.300 L46.300 46.300 L38.700 38.700Z" fill="#f33b33"/><path d="M67 16.300 L46.300 46.300 L42.500 42.500Z" fill="#c9221f"/><path d="M18.300 68.200 L46.300 46.300 L38.700 38.700Z" fill="#f6f6f6"/><path d="M18.300 68.200 L46.300 46.300 L42.500 42.500Z" fill="#c9cdd2"/></svg>
<!-- mail -->
<svg style="left:519px;top:1554px" width="90" height="100" viewBox="0 0 90 100"><defs><linearGradient id="ms" x1="0" y1="0" x2="0" y2="1"><stop offset="0" stop-color="#3a84da"/><stop offset=".6" stop-color="#8fc0ee"/><stop offset="1" stop-color="#cfe4f6"/></linearGradient></defs><g transform="rotate(-8.500 45 50)"><rect x="14.500" y="12" width="61" height="76" fill="#fff" stroke="#fff" stroke-width="4.500" stroke-dasharray="3.300 2.300"/><rect x="19" y="16.500" width="52" height="67" fill="url(#ms)"/><path d="M24 22 C26 19 31 20 33 24 C38 32 42 40 43 49 L33 55 C31 44 25 36 23 28Z" fill="#d6d0c4"/><path d="M26 24 C31 30 36 40 38 49 L34 52 C32 42 27 34 25 27Z" fill="#8d6e48"/><path d="M29 23 C34 29 39 39 41 48 L39.500 49 C37 40 33 31 28 24Z" fill="#6e5a44"/><path d="M41 48 C50 50 58 60 61 71 C60 74 56 73 53 71 C46 67 39 62 33 57Z" fill="#7f6f5e"/><path d="M40 52 C47 55 53 62 56 68 C49 66 42 62 36 58Z" fill="#b9aa92"/><ellipse cx="37" cy="54" rx="5" ry="8.500" transform="rotate(28 37 54)" fill="#c79d5e"/><path d="M33 58 L26 68 L31 68.500 L37 64Z" fill="#b5854a"/><circle cx="42.500" cy="47" r="2.600" fill="#efe6d6"/><path d="M44 45.500 L47 46 L44.500 48Z" fill="#d9a93a"/><g fill="none" stroke="#5f7fae" opacity=".75"><circle cx="61" cy="74" r="11" stroke-width="1.200"/><circle cx="61" cy="74" r="7.500" stroke-width="1"/></g><circle cx="61" cy="74" r="3.200" fill="#44649a" opacity=".85"/></g></svg>
<!-- contacts -->
<svg style="left:622.800px;top:1554px" width="90" height="100" viewBox="0 0 90 100"><defs><linearGradient id="ct" x1="0" y1="0" x2="1" y2="1"><stop offset="0" stop-color="#c08d50"/><stop offset="1" stop-color="#ab7a42"/></linearGradient></defs><g transform="rotate(-8.300 45 50)"><rect x="68" y="17.500" width="10.500" height="17" rx="2" fill="#dcdcdc"/><rect x="68" y="34.500" width="11.500" height="16" rx="2" fill="#4fb6e8"/><rect x="68" y="50.500" width="11.500" height="16" rx="2" fill="#49c062"/><rect x="68" y="66.500" width="11.500" height="15" rx="2" fill="#efac2c"/><rect x="15" y="10" width="60" height="80" rx="4.500" fill="url(#ct)"/><path d="M15 14.500 Q15 10 19.500 10 H21 V90 H19.500 Q15 90 15 85.500Z" fill="#9f6f3a"/><path d="M15 86 H75 Q75 90 70.500 90 H19.500 Q15 90 15 86Z" fill="#8d602f" opacity=".6"/><circle cx="46.500" cy="42" r="19.500" fill="none" stroke="#a57540" stroke-width="1.600"/><circle cx="40" cy="36.500" r="6.800" fill="#a87843"/><circle cx="53.500" cy="36.500" r="6.800" fill="#a87843"/><path d="M30 53 Q31 43 40 43 Q46 43 46.800 48 Q47.600 43 53.500 43 Q62 43 63 52.500 Q56 61.500 46.500 61.500 Q37 61.500 30 53Z" fill="#a87843"/></g></svg>
<!-- calendar -->
<svg style="left:722.500px;top:1550.200px" width="100" height="100" viewBox="0 0 100 100"><g transform="rotate(-8.500 50 50)"><rect x="15.500" y="20" width="69" height="70" rx="3" fill="#59636d"/><rect x="17" y="21.500" width="66" height="67" rx="2" fill="none" stroke="#8b959f" stroke-width="1"/><rect x="18.800" y="16.500" width="62.400" height="67" rx="2" fill="#fafafa"/><path d="M18.800 79 H81.200 V81.500 Q81.200 83.500 79.200 83.500 H20.800 Q18.800 83.500 18.800 81.500Z" fill="#d5d8db"/><path d="M18.800 18.500 Q18.800 16.500 20.800 16.500 H79.200 Q81.200 16.500 81.200 18.500 V34.200 H18.800Z" fill="#e9504d"/><text x="50" y="30.800" text-anchor="middle" font-family="Liberation Sans" font-size="15.500" fill="#fff">JUN</text><text x="49" y="76" text-anchor="middle" font-family="Liberation Sans" font-size="46" fill="#2a2a2a" stroke="#fafafa" stroke-width="1" letter-spacing="-1.500">24</text></g></svg>
<!-- notes -->
<svg style="left:828.700px;top:1552.900px" width="100" height="100" viewBox="0 0 100 100"><g transform="rotate(-9 50 50)"><rect x="17.500" y="11" width="65" height="78" rx="1.500" fill="#fdfdf9"/><rect x="17.500" y="86.500" width="65" height="2.500" fill="#d9d2b8"/><path d="M17.500 12.500 Q17.500 11 19 11 H81 Q82.500 11 82.500 12.500 V24.500 H17.500Z" fill="#f9d03e"/><path d="M17.500 24.500H82.500" stroke="#e0b02c" stroke-width="1.200"/><path d="M20 32.500H80M20 39.500H80M20 46.500H80M20 53.500H80M20 60.500H80M20 67.500H80M20 74.500H80M20 81.500H80" stroke="#dcdad2" stroke-width="1.100"/></g></svg>
<!-- reminders -->
<svg style="left:934.300px;top:1552.900px" width="100" height="100" viewBox="0 0 100 100"><g transform="rotate(-9.500 50 50)"><rect x="18.600" y="13.500" width="62.800" height="73" rx="6" fill="#fcfcfc"/><circle cx="29.500" cy="25.600" r="5.300" fill="#f8891a"/><circle cx="29.500" cy="40.900" r="5.300" fill="#27a5f4"/><circle cx="29.500" cy="56.200" r="5.300" fill="#52cf3c"/><circle cx="29.500" cy="71.500" r="5.300" fill="#cc66e6"/><path d="M39 32H77M39 47.300H77M39 62.600H77M39 77.900H77M39 18H77" stroke="#e3e3e3" stroke-width="1.200"/></g></svg>
<!-- maps -->
<svg style="left:1029.500px;top:1554.900px" width="110" height="100" viewBox="0 0 110 100"><defs><clipPath id="mp"><rect x="21.300" y="17" width="67.400" height="66"/></clipPath></defs><g transform="rotate(-8.600 55 50)"><rect x="19.800" y="15.500" width="70.400" height="69" fill="#fbfaf7"/><g clip-path="url(#mp)"><rect x="21" y="17" width="68" height="66" fill="#f0ece3"/><rect x="21" y="17" width="10" height="22" fill="#e2ded4"/><path d="M47 17 H58 C58 38 72 50 89 52 V62 C64 60 47 42 47 17Z" fill="#9bda7d"/><path d="M66 17 C66 30 76 40 89 41 V17Z" fill="#8fd471"/><path d="M21 26 C34 30 44 44 52 58 L64 72 L57 78 C44 60 36 42 21 38Z" fill="#f7d04b"/><rect x="24" y="50" width="11" height="34" fill="#f3b6c5"/><rect x="35" y="58" width="11" height="26" fill="#fdfdfd"/><rect x="60" y="66" width="29" height="17" fill="#e2ded4"/><rect x="34.800" y="17" width="10.400" height="38" fill="#3a8fe8"/></g><circle cx="40" cy="54.700" r="10.500" fill="#1c79e2"/><path d="M40 47 L45.200 60.500 L40 57 L34.800 60.500Z" fill="#fff"/></g><circle cx="81.700" cy="66.100" r="21.500" fill="#f2f4f6" stroke="#e0e4e7" stroke-width="1"/><circle cx="81.700" cy="66.100" r="12.500" fill="#f7f9fa" stroke="#4c8090" stroke-width="1.500"/><text x="81.700" y="71" text-anchor="middle" font-family="Liberation Sans" font-size="13.500" fill="#444">3D</text><path d="M81.700 46.500 L84.700 51.500 H78.700Z" fill="#e0343c"/></svg>
<!-- photos -->
<svg style="left:1151.400px;top:1561.400px" width="85" height="85" viewBox="0 0 85 85"><defs><radialGradient id="ph" cx=".5" cy=".45" r=".55"><stop offset="0" stop-color="#ffffff"/><stop offset=".8" stop-color="#f3f3f3"/><stop offset="1" stop-color="#dcdcdc"/></radialGradient></defs><circle cx="42.500" cy="42.500" r="42" fill="url(#ph)"/><g transform="translate(42.500 42.500)" style="isolation:isolate"><path d="M0 0 L-10.300 -18 V-26.500 Q-10.300 -36.800 0 -36.800 Q10.300 -36.800 10.300 -26.500 V-18Z" fill="#f7a21b" transform="rotate(0)" style="mix-blend-mode:multiply" opacity=".88"/><path d="M0 0 L-10.300 -18 V-26.500 Q-10.300 -36.800 0 -36.800 Q10.300 -36.800 10.300 -26.500 V-18Z" fill="#f4df1c" transform="rotate(45)" style="mix-blend-mode:multiply" opacity=".88"/><path d="M0 0 L-10.300 -18 V-26.500 Q-10.300 -36.800 0 -36.800 Q10.300 -36.800 10.300 -26.500 V-18Z" fill="#a9d13a" transform="rotate(90)" style="mix-blend-mode:multiply" opacity=".88"/><path d="M0 0 L-10.300 -18 V-26.500 Q-10.300 -36.800 0 -36.800 Q10.300 -36.800 10.300 -26.500 V-18Z" fill="#55c286" transform="rotate(135)" style="mix-blend-mode:multiply" opacity=".88"/><path d="M0 0 L-10.300 -18 V-26.500 Q-10.300 -36.800 0 -36.800 Q10.300 -36.800 10.300 -26.500 V-18Z" fill="#62aeea" transform="rotate(180)" style="mix-blend-mode:multiply" opacity=".88"/><path d="M0 0 L-10.300 -18 V-26.500 Q-10.300 -36.800 0 -36.800 Q10.300 -36.800 10.300 -26.500 V-18Z" fill="#9c80d8" transform="rotate(225)" style="mix-blend-mode:multiply" opacity=".88"/><path d="M0 0 L-10.300 -18 V-26.500 Q-10.300 -36.800 0 -36.800 Q10.300 -36.800 10.300 -26.500 V-18Z" fill="#e683b6" transform="rotate(270)" style="mix-blend-mode:multiply" opacity=".88"/><path d="M0 0 L-10.300 -18 V-26.500 Q-10.300 -36.800 0 -36.800 Q10.300 -36.800 10.300 -26.500 V-18Z" fill="#f0553f" transform="rotate(315)" style="mix-blend-mode:multiply" opacity=".88"/></g></svg>
<!-- messages -->
<svg style="left:1254px;top:1564px" width="90" height="84" viewBox="0 0 90 84"><defs><linearGradient id="mg" x1="0" y1="0" x2="0" y2="1"><stop offset="0" stop-color="#4ab3fc"/><stop offset="1" stop-color="#1a7cf0"/></linearGradient></defs><path d="M43.700 1.800 C67 1.800 85.100 16 85.100 36 C85.100 56 67 70.200 43.700 70.200 C38 70.200 33 69.500 28.500 68 C25 73 21 75.500 16 76.200 C20 72 21 67.500 20.500 64 C9 58 2.300 48 2.300 36 C2.300 16 20.400 1.800 43.700 1.800Z" fill="url(#mg)"/><path d="M58.400 35.900 C72 35.900 83 45 83 56.300 C83 64 78 70.500 70.500 74 C71.500 77.500 73.500 79.500 76 80.500 C70 80.500 66 78.500 63.500 76.200 C62 76.500 60 76.700 58.400 76.700 C44.800 76.700 33.800 67.600 33.800 56.300 C33.800 45 44.800 35.900 58.400 35.900Z" fill="#eef3f9"/><circle cx="47" cy="56.300" r="3.800" fill="#1c5fb6"/><circle cx="59.500" cy="56.300" r="3.800" fill="#1c5fb6"/><circle cx="72" cy="56.300" r="3.800" fill="#1c5fb6"/></svg>
<!-- facetime -->
<svg style="left:1361px;top:1567px" width="88" height="76" viewBox="0 0 88 76"><defs><linearGradient id="ft" x1="0" y1="0" x2="0" y2="1"><stop offset="0" stop-color="#41ee66"/><stop offset="1" stop-color="#10c02f"/></linearGradient><linearGradient id="fw" x1="0" y1="0" x2="0" y2="1"><stop offset="0" stop-color="#ffffff"/><stop offset="1" stop-color="#dcdcdc"/></linearGradient></defs><rect x=".8" y=".7" width="75.400" height="67.700" rx="10.500" fill="url(#ft)"/><rect x="12.200" y="17.800" width="36.200" height="32.900" rx="5.500" fill="url(#fw)"/><path d="M50 31 L64 19.500 Q66 18.500 66 21 V48 Q66 50 64 49 L50 38Z" fill="#f2f2f2"/><circle cx="64.100" cy="52.600" r="21" fill="#f5f6f5" stroke="#e2e5e2" stroke-width="1"/><path d="M54.500 42.500 Q51.500 46.500 57.500 54.500 Q65.500 64.500 72.500 63.500 L74.500 59.500 L69.500 55.500 L66.500 57.500 Q61.500 54.500 59.500 49.500 L62 47 L58.500 41.500Z" fill="#27cf45"/></svg>
<!-- news -->
<svg style="left:1465.200px;top:1561.200px" width="86" height="86" viewBox="0 0 86 86"><defs><linearGradient id="nw" x1="0" y1="0" x2="0" y2="1"><stop offset="0" stop-color="#ffffff"/><stop offset="1" stop-color="#e9e9eb"/></linearGradient></defs><circle cx="42.700" cy="43" r="40.700" fill="url(#nw)" stroke="#f0405c" stroke-width="4"/><path d="M22.300 19.700 H33 L66 52 V63.400 Q66 66.400 63 66.400 H52.200 L19.300 34.200 V22.700 Q19.300 19.700 22.300 19.700Z" fill="#f8405c"/><path d="M44.300 19.700 H63 Q66 19.700 66 22.700 V40.700Z" fill="#f8526b"/><path d="M19.300 45.300 V63.400 Q19.300 66.400 22.300 66.400 H40.300Z" fill="#f8526b"/></svg>
<!-- itunes -->
<svg style="left:1569px;top:1561.200px" width="86" height="86" viewBox="0 0 86 86"><defs><linearGradient id="it" x1=".15" y1=".1" x2=".85" y2=".9"><stop offset="0" stop-color="#f6566a"/><stop offset=".45" stop-color="#c25ad6"/><stop offset=".7" stop-color="#8f6af0"/><stop offset="1" stop-color="#2fc4f6"/></linearGradient><linearGradient id="nt" x1=".3" y1="0" x2=".6" y2="1"><stop offset="0" stop-color="#f6465c"/><stop offset=".5" stop-color="#d458a8"/><stop offset=".8" stop-color="#8a62ee"/><stop offset="1" stop-color="#3fa2f6"/></linearGradient><linearGradient id="iw" x1="0" y1="0" x2="0" y2="1"><stop offset="0" stop-color="#ffffff"/><stop offset="1" stop-color="#ebeaee"/></linearGradient></defs><circle cx="43" cy="43" r="41" fill="url(#iw)" stroke="url(#it)" stroke-width="4"/><path d="M33.500 21.500 L62 15.200 V55 C62 60 57 62.500 53 62.500 C49 62.500 46.500 60.500 46.500 57.500 C46.500 54 50 52 54 52 L56.500 51.800 V29.200 L39 33 V60.500 C39 65.500 34 68 30 68 C26 68 23.500 66 23.500 63 C23.500 59.500 27 57.500 31 57.500 L33.500 57.300Z" fill="url(#nt)"/></svg>
<!-- app store -->
<svg style="left:1676px;top:1561.500px" width="85" height="85" viewBox="0 0 85 85"><defs><linearGradient id="as" x1="0" y1="0" x2="0" y2="1"><stop offset="0" stop-color="#1fc7fb"/><stop offset="1" stop-color="#1c66f0"/></linearGradient></defs><circle cx="42.200" cy="42.500" r="39.700" fill="url(#as)" stroke="#f2f4f7" stroke-width="3.200"/><g stroke="#f5f7fa" stroke-width="6.200" stroke-linecap="round"><path d="M47.500 18.500 L22.500 61"/><path d="M37.500 18.500 L61.500 61"/><path d="M17 50 H68"/></g></svg>
<!-- system prefs -->
<svg style="left:1780px;top:1564.800px" width="84" height="78" viewBox="0 0 84 78"><defs><linearGradient id="sp" x1="0" y1="0" x2="0" y2="1"><stop offset="0" stop-color="#c9d3d9"/><stop offset="1" stop-color="#86898c"/></linearGradient><linearGradient id="gr" x1="0" y1="0" x2="0" y2="1"><stop offset="0" stop-color="#d2d2d2"/><stop offset="1" stop-color="#8c8c8c"/></linearGradient></defs><rect x="0" y="0" width="84" height="78" rx="3" fill="url(#sp)"/><circle cx="42" cy="40" r="33.600" fill="#2c2e30"/><path d="M68.5 40.0 L72.5 41.0 L72.3 43.8 L68.2 44.1 L67.6 46.9 L71.2 48.8 L70.2 51.5 L66.2 50.8 L64.9 53.2 L67.9 56.1 L66.3 58.4 L62.6 56.7 L60.7 58.7 L62.9 62.2 L60.7 64.1 L57.6 61.4 L55.2 62.9 L56.4 66.9 L53.8 68.1 L51.5 64.7 L48.9 65.6 L49.0 69.7 L46.1 70.2 L44.8 66.4 L42.0 66.5 L41.0 70.5 L38.2 70.3 L37.9 66.2 L35.1 65.6 L33.2 69.2 L30.5 68.2 L31.2 64.2 L28.8 62.9 L25.9 65.9 L23.6 64.3 L25.3 60.6 L23.3 58.7 L19.8 60.9 L17.9 58.7 L20.6 55.6 L19.1 53.2 L15.1 54.4 L13.9 51.8 L17.3 49.5 L16.4 46.9 L12.3 47.0 L11.8 44.1 L15.6 42.8 L15.5 40.0 L11.5 39.0 L11.7 36.2 L15.8 35.9 L16.4 33.1 L12.8 31.2 L13.8 28.5 L17.8 29.2 L19.1 26.8 L16.1 23.9 L17.7 21.6 L21.4 23.3 L23.3 21.3 L21.1 17.8 L23.3 15.9 L26.4 18.6 L28.7 17.1 L27.6 13.1 L30.2 11.9 L32.5 15.3 L35.1 14.4 L35.0 10.3 L37.9 9.8 L39.2 13.6 L42.0 13.5 L43.0 9.5 L45.8 9.7 L46.1 13.8 L48.9 14.4 L50.8 10.8 L53.5 11.8 L52.8 15.8 L55.2 17.1 L58.1 14.1 L60.4 15.7 L58.7 19.4 L60.7 21.3 L64.2 19.1 L66.1 21.3 L63.4 24.4 L64.9 26.7 L68.9 25.6 L70.1 28.2 L66.7 30.5 L67.6 33.1 L71.7 33.0 L72.2 35.9 L68.4 37.2Z" fill="url(#gr)"/><circle cx="42" cy="40" r="21.500" fill="#4b4d4f"/><circle cx="42" cy="40" r="23.200" fill="none" stroke="url(#gr)" stroke-width="3.600"/><path d="M42 40 L30.0 22.8 M42 40 L62.9 41.8 M42 40 L30.9 57.8" stroke="#b4b4b4" stroke-width="5.500" fill="none"/><circle cx="42" cy="40" r="4.500" fill="#b8b8b8"/><circle cx="42" cy="40" r="1.800" fill="#e2e2e2"/></svg>
<!-- terminal -->
<svg style="left:1885px;top:1566px" width="86" height="76" viewBox="0 0 86 76"><rect x="1.800" y="1.800" width="82" height="71.500" rx="4.500" fill="#0c0c0c" stroke="#a9aeb3" stroke-width="1.800"/><rect x="6" y="6" width="73.500" height="63" rx="3" fill="#232323"/><text x="11.500" y="26" font-family="Liberation Mono" font-weight="bold" font-size="22" fill="#f4f4f4" stroke="#f4f4f4" stroke-width=".6">&gt;_</text></svg>
<div class="a" style="left:2004px;top:1576px;width:2px;height:64px;background:#505050"></div>
<!-- mountain app -->
<svg style="left:2037.900px;top:1562px" width="84" height="84" viewBox="0 0 84 84"><defs><linearGradient id="mt" x1="0" y1="0" x2="1" y2="1"><stop offset="0" stop-color="#4a86e6"/><stop offset=".5" stop-color="#6a9cf0"/><stop offset="1" stop-color="#2e64d6"/></linearGradient><clipPath id="mc"><circle cx="42" cy="42" r="38"/></clipPath></defs><circle cx="42" cy="42" r="39.800" fill="url(#mt)" stroke="#fbfcfe" stroke-width="4.400"/><g clip-path="url(#mc)"><rect x="0" y="57" width="84" height="27" fill="#2f60d6" opacity=".75"/><path d="M11.500 54.500 L27 24.500 L36 41" fill="#2e9bf2" stroke="#fff" stroke-width="3" stroke-linejoin="miter"/><path d="M30 54.500 L50 12 L71 54.500Z" fill="#3fb0f6" stroke="#fff" stroke-width="3" stroke-linejoin="miter"/><path d="M11.500 54.500 L27 24.500 L35 39 L28 54.500Z" fill="#2e9bf2"/><path d="M2 56.200 H82" stroke="#fff" stroke-width="3.200"/></g></svg>
<!-- preview -->
<svg style="left:2140px;top:1565px" width="90" height="80" viewBox="0 0 90 80"><defs><pattern id="sd" width="4" height="4" patternUnits="userSpaceOnUse"><rect width="4" height="4" fill="#b9965e"/><circle cx="1" cy="1" r=".8" fill="#d9c08a"/><circle cx="3" cy="3" r=".7" fill="#8f6f3e"/></pattern><linearGradient id="sky" x1="0" y1="0" x2="0" y2="1"><stop offset="0" stop-color="#8fb4ee"/><stop offset="1" stop-color="#c4d8f4"/></linearGradient></defs><g transform="rotate(1.500 48 25)"><rect x="12.500" y="3" width="69" height="42" fill="url(#sd)" stroke="#f6f6f6" stroke-width="2.600"/></g><g transform="rotate(-8 40 45)"><rect x="5" y="15" width="70" height="57" fill="#fafafa"/><rect x="8.500" y="18.500" width="63" height="50" fill="url(#sky)"/><rect x="8.500" y="40" width="63" height="8" fill="#2d4f9c"/><rect x="8.500" y="48" width="63" height="20.500" fill="#9ec4dc"/><path d="M8.500 52 Q20 46 32 52 Q44 58 56 50 L71.500 52 V60 Q50 56 36 62 Q20 66 8.500 60Z" fill="#e8f2f8"/><path d="M8.500 60 Q20 56 30 61 Q22 68 8.500 68.500Z" fill="#5e564c"/><path d="M30 66 Q40 60 52 68.500 H30Z" fill="#7a6a56"/></g><path d="M54.500 50 V66 Q54.500 77 71 77 Q87.500 77 87.500 66 V50Z" fill="#8a7c6a"/><path d="M54.500 58 V66 Q54.500 77 71 77 Q87.500 77 87.500 66 V58 Q87.500 69 71 69 Q54.500 69 54.500 58Z" fill="#6f6558"/><ellipse cx="71" cy="50" rx="16.500" ry="13" fill="#d5d9dc" stroke="#7e8387" stroke-width="2.600"/><ellipse cx="71" cy="50.500" rx="12" ry="9" fill="#aebfd2"/><path d="M61 54 Q68 48 80 53 Q76 59 70 59.500 Q64 59 61 54Z" fill="#8c7a62"/><path d="M62 46 Q68 42 76 45" stroke="#eef4fa" stroke-width="1.800" fill="none"/></svg>
<!-- excel -->
<svg style="left:2247px;top:1567px" width="85" height="74" viewBox="0 0 85 74"><defs><clipPath id="xc"><rect x="20" y="0" width="65" height="74" rx="4"/></clipPath></defs><g clip-path="url(#xc)"><rect x="20" y="0" width="32.500" height="18.500" fill="#21a366"/><rect x="52.500" y="0" width="32.500" height="18.500" fill="#33c481"/><rect x="20" y="18.500" width="32.500" height="18.500" fill="#107c41"/><rect x="52.500" y="18.500" width="32.500" height="18.500" fill="#21a366"/><rect x="20" y="37" width="32.500" height="18.500" fill="#185c37"/><rect x="52.500" y="37" width="32.500" height="18.500" fill="#107c41"/><rect x="20" y="55.500" width="65" height="18.500" fill="#185c37"/></g><rect x="0" y="15.500" width="43" height="43" rx="4" fill="#107c41"/><path d="M12 26 H18.500 L22 33.500 L25.800 26 H32 L25.500 37 L32.200 48 H25.600 L21.800 40.500 L18 48 H11.600 L18.400 37Z" fill="#fff"/></svg>
<div class="a" style="left:2366px;top:1560px;width:2px;height:96px;background:#4a4a4a"></div>
<!-- folder -->
<svg style="left:2401px;top:1570px" width="84" height="71" viewBox="0 0 84 71"><defs><linearGradient id="fd" x1="0" y1="0" x2="0" y2="1"><stop offset="0" stop-color="#7cc0ea"/><stop offset="1" stop-color="#4f9ed6"/></linearGradient></defs><path d="M6 1 H76 L80 10 H6Z" fill="#222"/><path d="M28 7 H74 V14 H28Z" fill="#e9e2d2"/><path d="M1 12 Q1 8 5 8 H26 Q29 8 31 11 L33 14 H79 Q83 14 83 18 V66 Q83 70 79 70 H5 Q1 70 1 66Z" fill="url(#fd)"/><path d="M1 20 H83" stroke="#8ccaf0" stroke-width="1.500" opacity=".7"/></svg>
<!-- trash -->
<svg style="left:2511px;top:1557px" width="72" height="91" viewBox="0 0 72 91"><defs><linearGradient id="tr" x1="0" x2="1"><stop offset="0" stop-color="#46484b"/><stop offset=".3" stop-color="#7a7d80"/><stop offset=".55" stop-color="#5c5f62"/><stop offset=".8" stop-color="#6d7073"/><stop offset="1" stop-color="#38393c"/></linearGradient></defs><path d="M6 14 L10 5 L18 8 L22 1 L31 6 L37 0 L44 6 L52 2 L57 8 L64 6 L66 15 L60 22 H12Z" fill="#e4e5e7"/><path d="M14 9 L22 13 L17 19Z M44 6 L52 11 L46 18Z" fill="#b9bcc0"/><path d="M27 6 L35 12 L30 19Z" fill="#4f8fc8"/><path d="M36 8 L42 10 L40 18Z" fill="#3a3c3e"/><path d="M52 8 L58 13 L54 19Z" fill="#f4f4f5"/><path d="M1.500 13 Q36 25 70.500 13 L61.500 84 Q36 95 10.500 84Z" fill="url(#tr)"/><path d="M20 30 Q34 26 42 34 Q30 44 26 60 Q20 46 20 30Z" fill="#9a9da0" opacity=".35"/><ellipse cx="36" cy="13.500" rx="34.500" ry="6" fill="none" stroke="#8e9194" stroke-width="2"/></svg>
</body></html>
